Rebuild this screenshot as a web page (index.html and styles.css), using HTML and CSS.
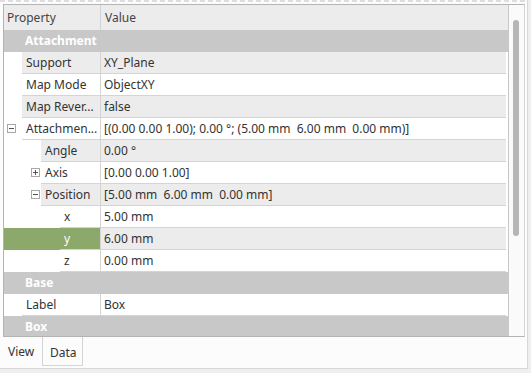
FILE: index.html
```html
<!DOCTYPE html>
<html>
<head>
<meta charset="utf-8">
<link rel="stylesheet" href="styles.css">
</head>
<body>
<div class="panel">
  <div class="topstrip"></div>
  <div class="frame">
    <div class="tree">
      <div class="header">
        <div class="hcell hname">Property</div>
        <div class="hcell hvalue">Value</div>
      </div>
      <div class="group"><span>Attachment</span></div>
      <div class="row alt"><div class="ind l0"></div><div class="name">Support</div><div class="value">XY_Plane</div></div>
      <div class="row"><div class="ind l0"></div><div class="name">Map Mode</div><div class="value">ObjectXY</div></div>
      <div class="row alt"><div class="ind l0"></div><div class="name">Map Rever...</div><div class="value">false</div></div>
      <div class="row"><div class="ind l0"><span class="box minus"></span></div><div class="name">Attachmen...</div><div class="value">[(0.00 0.00 1.00); 0.00 °; (5.00 mm  6.00 mm  0.00 mm)]</div></div>
      <div class="row alt"><div class="ind l1"></div><div class="name">Angle</div><div class="value">0.00 °</div></div>
      <div class="row"><div class="ind l1"><span class="box plus"></span></div><div class="name">Axis</div><div class="value">[0.00 0.00 1.00]</div></div>
      <div class="row alt"><div class="ind l1"><span class="box minus"></span></div><div class="name">Position</div><div class="value">[5.00 mm  6.00 mm  0.00 mm]</div></div>
      <div class="row"><div class="ind l2"></div><div class="name">x</div><div class="value">5.00 mm</div></div>
      <div class="row alt sel"><div class="ind l2"></div><div class="name">y</div><div class="value">6.00 mm</div></div>
      <div class="row"><div class="ind l2"></div><div class="name">z</div><div class="value">0.00 mm</div></div>
      <div class="group"><span>Base</span></div>
      <div class="row"><div class="ind l0"></div><div class="name">Label</div><div class="value">Box</div></div>
      <div class="group"><span>Box</span></div>
    </div>
    <div class="scrollbar"><div class="handle"></div></div>
  </div>
  <div class="tabs">
    <div class="tab current">View</div>
    <div class="tab other">Data</div>
  </div>
</div>
</body>
</html>
```
FILE: styles.css
```css
html, body {
  margin: 0;
  padding: 0;
  background: #efefef;
}
body {
  font-family: "Noto Sans", "Open Sans", sans-serif;
  font-size: 12px;
  color: #333;
}
.panel {
  width: 527px;
  height: 368px;
  background: #fcfcfc;
  border-right: 1px solid #d8d8d8;
  border-bottom: 1px solid #d8d8d8;
  display: flex;
  flex-direction: column;
}
.topstrip {
  height: 4px;
  background:
    repeating-linear-gradient(90deg, #dedede 0 5px, transparent 5px 8px) top / 100% 2px no-repeat;
}
.frame {
  margin-left: 3px;
  width: 520px;
  height: 331px;
  border: 1px solid #b4b4b4;
  border-right-color: #d4d4d4;
  display: flex;
  background: #fff;
}
.tree {
  width: 504px;
  overflow: hidden;
  display: flex;
  flex-direction: column;
}
.scrollbar {
  width: 15px;
  border-left: 1px solid #c8c8c8;
  background: #fafafa;
}
.handle {
  margin-left: 4px;
  margin-top: 15px;
  width: 6px;
  height: 216px;
  border-radius: 3px;
  background: #b6b6b6;
}
.header {
  height: 25px;
  flex: none;
  display: flex;
  background: #ececec;
  color: #444;
}
.hcell {
  line-height: 25px;
  padding-left: 3px;
}
.hname {
  width: 93px;
  border-right: 1px solid #d2d2d2;
}
.hvalue {
  padding-left: 4px;
}
.group {
  height: 22px;
  flex: none;
  background: #c8c8c8;
  color: #fff;
  font-weight: bold;
  line-height: 21px;
  padding-left: 21px;
}
.row {
  height: 22px;
  flex: none;
  display: flex;
  background: #fff;
}
.ind {
  flex: none;
  background: #fff;
  position: relative;
}
.l0 { width: 18px; }
.l1 { width: 37px; }
.l2 { width: 56px; }
.name, .value {
  height: 21px;
  line-height: 21px;
  border-bottom: 1px solid #d4d4d4;
  white-space: pre;
  overflow: hidden;
}
.name {
  flex: 1 1 auto;
  width: 0;
  padding-left: 4px;
  border-right: 1px solid #d4d4d4;
}
.row .l0 + .name { max-width: 74px; }
.row .l1 + .name { max-width: 55px; }
.row .l2 + .name { max-width: 36px; }
.value {
  width: 402px;
  flex: none;
  padding-left: 3px;
}
.row.alt .name, .row.alt .value {
  background: #ececec;
}
.row.sel .ind, .row.sel .name {
  background: #8ca86a;
  color: #fff;
}
.box {
  position: absolute;
  top: 6px;
  right: 1px;
  width: 7px;
  height: 7px;
  border: 1px solid #a8a8a8;
  background: #fff;
}
.l0 .box { right: 6px; }
.box::before, .box::after {
  content: "";
  position: absolute;
  background: #555;
}
.box::before {
  left: 1px;
  top: 3px;
  width: 5px;
  height: 1px;
}
.plus::after {
  left: 3px;
  top: 1px;
  width: 1px;
  height: 5px;
}
.tabs {
  display: flex;
  height: 31px;
  margin-left: 3px;
}
.tab {
  height: 29px;
  line-height: 29px;
}
.current {
  width: 39px;
  padding-left: 5px;
  box-sizing: border-box;
  color: #333;
}
.other {
  width: 41px;
  box-sizing: border-box;
  border: 1px solid #d4d4d4;
  border-top: none;
  padding-left: 7px;
  line-height: 31px;
}
```
